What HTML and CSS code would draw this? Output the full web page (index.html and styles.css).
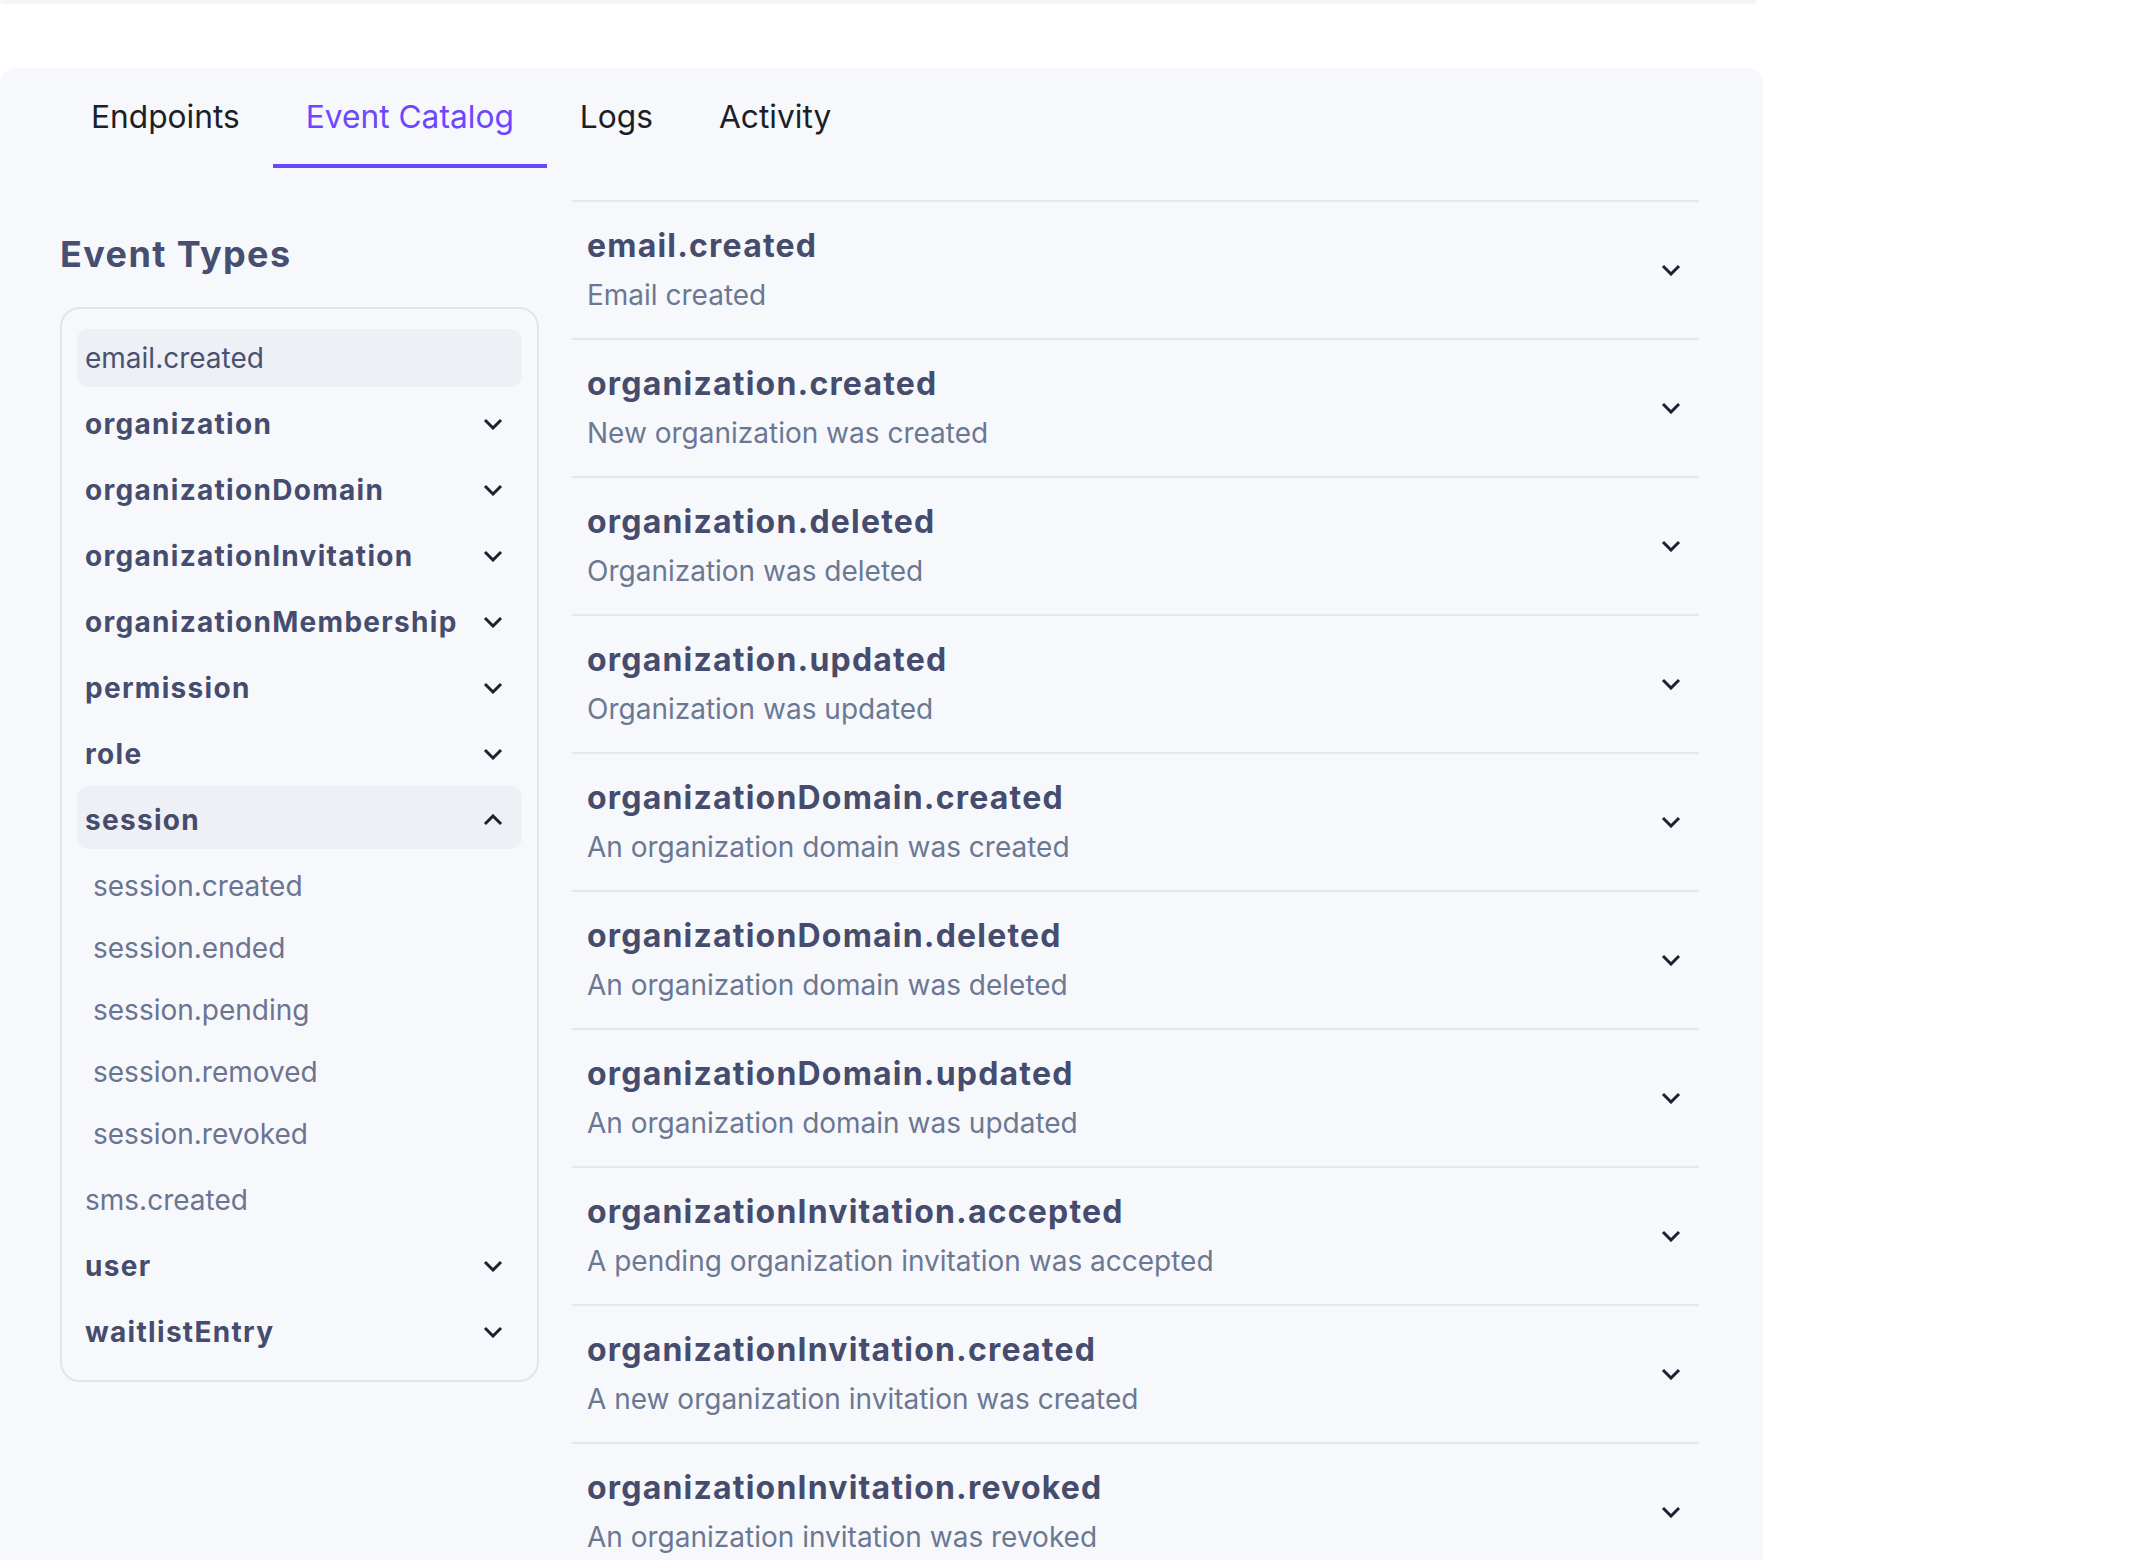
FILE: index.html
```html
<!DOCTYPE html>
<html lang="en">
<head>
<meta charset="utf-8">
<title>Event Catalog</title>
<link rel="stylesheet" href="styles.css">
</head>
<body>
<div class="top-strip"></div>
<main class="panel">
  <nav class="tabs">
    <a class="tab">Endpoints</a>
    <a class="tab active">Event Catalog</a>
    <a class="tab">Logs</a>
    <a class="tab">Activity</a>
  </nav>
  <div class="content">
    <aside class="sidebar">
      <h2 class="side-title">Event Types</h2>
      <div class="type-card">
        <div class="row leaf selected">email.created</div>
        <div class="row group">organization<svg class="chev-s" viewBox="0 0 20 12"><path d="M2 2l8 8 8-8"/></svg></div>
        <div class="row group">organizationDomain<svg class="chev-s" viewBox="0 0 20 12"><path d="M2 2l8 8 8-8"/></svg></div>
        <div class="row group">organizationInvitation<svg class="chev-s" viewBox="0 0 20 12"><path d="M2 2l8 8 8-8"/></svg></div>
        <div class="row group">organizationMembership<svg class="chev-s" viewBox="0 0 20 12"><path d="M2 2l8 8 8-8"/></svg></div>
        <div class="row group">permission<svg class="chev-s" viewBox="0 0 20 12"><path d="M2 2l8 8 8-8"/></svg></div>
        <div class="row group">role<svg class="chev-s" viewBox="0 0 20 12"><path d="M2 2l8 8 8-8"/></svg></div>
        <div class="row group selected open">session<svg class="chev-s" viewBox="0 0 20 12"><path d="M2 10l8-8 8 8"/></svg></div>
        <div class="sub-list">
          <div class="sub">session.created</div>
          <div class="sub">session.ended</div>
          <div class="sub">session.pending</div>
          <div class="sub">session.removed</div>
          <div class="sub">session.revoked</div>
        </div>
        <div class="row leaf muted">sms.created</div>
        <div class="row group">user<svg class="chev-s" viewBox="0 0 20 12"><path d="M2 2l8 8 8-8"/></svg></div>
        <div class="row group">waitlistEntry<svg class="chev-s" viewBox="0 0 20 12"><path d="M2 2l8 8 8-8"/></svg></div>
      </div>
    </aside>
    <section class="events">
      <div class="event"><div class="event-text"><div class="event-name">email.created</div><div class="event-desc">Email created</div></div><svg class="chev" viewBox="0 0 20 12"><path d="M2 2l8 8 8-8"/></svg></div>
      <div class="event"><div class="event-text"><div class="event-name">organization.created</div><div class="event-desc">New organization was created</div></div><svg class="chev" viewBox="0 0 20 12"><path d="M2 2l8 8 8-8"/></svg></div>
      <div class="event"><div class="event-text"><div class="event-name">organization.deleted</div><div class="event-desc">Organization was deleted</div></div><svg class="chev" viewBox="0 0 20 12"><path d="M2 2l8 8 8-8"/></svg></div>
      <div class="event"><div class="event-text"><div class="event-name">organization.updated</div><div class="event-desc">Organization was updated</div></div><svg class="chev" viewBox="0 0 20 12"><path d="M2 2l8 8 8-8"/></svg></div>
      <div class="event"><div class="event-text"><div class="event-name">organizationDomain.created</div><div class="event-desc">An organization domain was created</div></div><svg class="chev" viewBox="0 0 20 12"><path d="M2 2l8 8 8-8"/></svg></div>
      <div class="event"><div class="event-text"><div class="event-name">organizationDomain.deleted</div><div class="event-desc">An organization domain was deleted</div></div><svg class="chev" viewBox="0 0 20 12"><path d="M2 2l8 8 8-8"/></svg></div>
      <div class="event"><div class="event-text"><div class="event-name">organizationDomain.updated</div><div class="event-desc">An organization domain was updated</div></div><svg class="chev" viewBox="0 0 20 12"><path d="M2 2l8 8 8-8"/></svg></div>
      <div class="event"><div class="event-text"><div class="event-name">organizationInvitation.accepted</div><div class="event-desc">A pending organization invitation was accepted</div></div><svg class="chev" viewBox="0 0 20 12"><path d="M2 2l8 8 8-8"/></svg></div>
      <div class="event"><div class="event-text"><div class="event-name">organizationInvitation.created</div><div class="event-desc">A new organization invitation was created</div></div><svg class="chev" viewBox="0 0 20 12"><path d="M2 2l8 8 8-8"/></svg></div>
      <div class="event last"><div class="event-text"><div class="event-name">organizationInvitation.revoked</div><div class="event-desc">An organization invitation was revoked</div></div><svg class="chev" viewBox="0 0 20 12"><path d="M2 2l8 8 8-8"/></svg></div>
    </section>
  </div>
</main>
</body>
</html>
```

FILE: styles.css
```css
html, body {
  margin: 0;
  padding: 0;
  background: #ffffff;
  font-family: Inter, "Noto Sans", "Liberation Sans", sans-serif;
  overflow: hidden;
}

.top-strip {
  width: 1757px;
  height: 4px;
  background: #f5f5f7;
  border-radius: 0 0 12px 12px;
}

.panel {
  margin-top: 64px;
  width: 1763px;
  min-height: 1492px;
  box-sizing: border-box;
  padding: 0 64px 0 60px;
  background: #f7f8fb;
  border-radius: 16px 16px 0 0;
}

.tabs {
  display: flex;
  margin-left: -2px;
}

.tab {
  font-size: 31.7px;
  line-height: 40px;
  padding: 29px 33px 27px;
  border-bottom: 4px solid transparent;
  color: #1d1f27;
  cursor: pointer;
}

.tab.active {
  color: #6c47ff;
  border-bottom-color: #6c47ff;
}

.content {
  display: flex;
  gap: 33px;
  margin-top: 32px;
  align-items: flex-start;
}

.sidebar {
  width: 479px;
  flex: none;
}

.side-title {
  margin: 32px 0 31px;
  font-size: 36px;
  line-height: 44px;
  font-weight: 700;
  letter-spacing: 1.4px;
  color: #474f70;
}

.type-card {
  border: 2px solid #e2e4ec;
  border-radius: 20px;
  padding: 20px 15px 19px;
  display: flex;
  flex-direction: column;
  gap: 8px;
}

.row {
  height: 58px;
  box-sizing: border-box;
  display: flex;
  align-items: center;
  justify-content: space-between;
  padding: 0 19px 0 8px;
  border-radius: 12px;
  font-size: 28px;
  color: #454c6d;
}

.row.group {
  font-weight: 700;
  letter-spacing: 1.3px;
}

.row.open {
  height: 63px;
  margin-top: -5px;
  padding-top: 4px;
}

.row.leaf {
  font-weight: 400;
  color: #4a5272;
}

.row.leaf.muted {
  color: #6b7490;
}

.row.selected {
  background: #eef0f5;
}

.sub-list {
  display: flex;
  flex-direction: column;
  gap: 4px;
}

.sub {
  height: 58px;
  display: flex;
  align-items: center;
  padding-left: 16px;
  font-size: 28px;
  color: #6b7490;
}

.chev-s {
  width: 20px;
  height: 12px;
  fill: none;
  stroke: #1d2030;
  stroke-width: 3;
  flex: none;
}

.events {
  flex: 1;
  display: flex;
  flex-direction: column;
}

.event {
  height: 138px;
  box-sizing: border-box;
  border-top: 2px solid #e3e7ee;
  display: flex;
  align-items: center;
  justify-content: space-between;
  padding: 0 18px 2px 15px;
}

.event-name {
  font-size: 32px;
  line-height: 40px;
  font-weight: 700;
  letter-spacing: 1.2px;
  color: #454c6d;
}

.event-desc {
  margin-top: 11px;
  font-size: 28px;
  line-height: 36px;
  color: #6b7894;
}

.chev {
  width: 20px;
  height: 12px;
  margin-top: 2px;
  fill: none;
  stroke: #1d2030;
  stroke-width: 3;
  flex: none;
}
```
